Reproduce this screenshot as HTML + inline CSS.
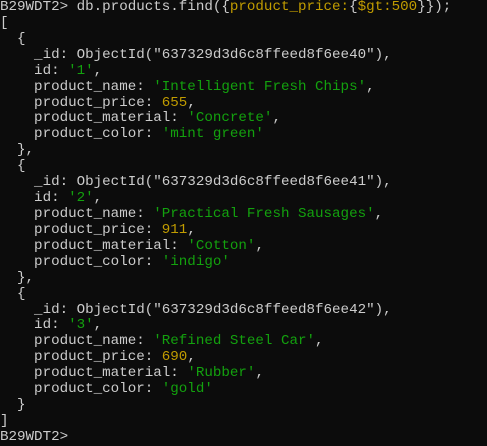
<!DOCTYPE html>
<html><head><style>
html,body{margin:0;padding:0;background:#0c0c0c;width:487px;height:446px;overflow:hidden}
.t{position:absolute;left:0;top:0px;font-family:"Liberation Mono",monospace;font-size:14.2px;color:#cccccc}
.t div{height:15.93px;line-height:15.93px;white-space:pre;overflow:visible}
.g{color:#13a10e}.y{color:#c19c00}
</style></head><body><div class="t"><div>B29WDT2&gt; db.products.find({<span class="y">product_price:</span>{<span class="y">$gt:500</span>}});</div><div>[</div><div>  {</div><div>    _id: ObjectId("637329d3d6c8ffeed8f6ee40"),</div><div>    id: <span class="g">'1'</span>,</div><div>    product_name: <span class="g">'Intelligent Fresh Chips'</span>,</div><div>    product_price: <span class="y">655</span>,</div><div>    product_material: <span class="g">'Concrete'</span>,</div><div>    product_color: <span class="g">'mint green'</span></div><div>  },</div><div>  {</div><div>    _id: ObjectId("637329d3d6c8ffeed8f6ee41"),</div><div>    id: <span class="g">'2'</span>,</div><div>    product_name: <span class="g">'Practical Fresh Sausages'</span>,</div><div>    product_price: <span class="y">911</span>,</div><div>    product_material: <span class="g">'Cotton'</span>,</div><div>    product_color: <span class="g">'indigo'</span></div><div>  },</div><div>  {</div><div>    _id: ObjectId("637329d3d6c8ffeed8f6ee42"),</div><div>    id: <span class="g">'3'</span>,</div><div>    product_name: <span class="g">'Refined Steel Car'</span>,</div><div>    product_price: <span class="y">690</span>,</div><div>    product_material: <span class="g">'Rubber'</span>,</div><div>    product_color: <span class="g">'gold'</span></div><div>  }</div><div>]</div><div>B29WDT2&gt;</div></div></body></html>
